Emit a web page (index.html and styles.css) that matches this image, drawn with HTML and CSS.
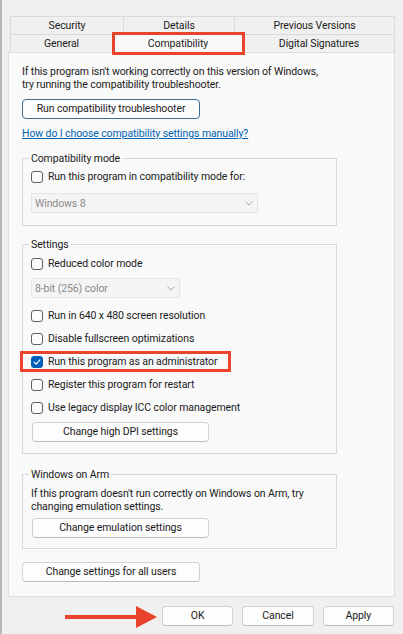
FILE: index.html
```html
<!DOCTYPE html>
<html>
<head>
<meta charset="utf-8">
<link rel="stylesheet" href="styles.css">
</head>
<body>
<div class="window">
  <div class="tabs">
    <div class="tabrow">
      <div class="tab t-sec">Security</div>
      <div class="tab t-det">Details</div>
      <div class="tab t-prev">Previous Versions</div>
    </div>
    <div class="tabrow">
      <div class="tab t-gen">General</div>
      <div class="tab t-comp selected">Compatibility<span class="mark"></span></div>
      <div class="tab t-dig">Digital Signatures</div>
    </div>
  </div>
  <div class="panel">
    <p class="intro">If this program isn't working correctly on this version of Windows,<br>try running the compatibility troubleshooter.</p>
    <div class="btn btn-focus btn-wide">Run compatibility troubleshooter</div>
    <a class="link" href="#">How do I choose compatibility settings manually?</a>

    <fieldset class="group g1">
      <legend>Compatibility mode</legend>
      <div class="row r-first1"><span class="cb"></span><span>Run this program in compatibility mode for:</span></div>
      <div class="select s1"><span>Windows 8</span><svg class="chev" width="8" height="5" viewBox="0 0 8 5"><path d="M0.5 0.5 L4 4 L7.5 0.5" fill="none" stroke="#a3a3a3" stroke-width="1"/></svg></div>
    </fieldset>

    <fieldset class="group g2">
      <legend>Settings</legend>
      <div class="row r-first2"><span class="cb"></span><span>Reduced color mode</span></div>
      <div class="select s2"><span>8-bit (256) color</span><svg class="chev" width="8" height="5" viewBox="0 0 8 5"><path d="M0.5 0.5 L4 4 L7.5 0.5" fill="none" stroke="#a3a3a3" stroke-width="1"/></svg></div>
      <div class="row r-after-sel"><span class="cb"></span><span>Run in 640 x 480 screen resolution</span></div>
      <div class="row r-next"><span class="cb"></span><span>Disable fullscreen optimizations</span></div>
      <div class="row r-next admin"><span class="cb checked"><svg width="10" height="10" viewBox="0 0 10 10"><path d="M2.2 5.2 L4.2 7.1 L7.9 2.9" fill="none" stroke="#fff" stroke-width="1.2" stroke-linecap="round" stroke-linejoin="round"/></svg></span><span>Run this program as an administrator</span><span class="mark"></span></div>
      <div class="row r-next"><span class="cb"></span><span>Register this program for restart</span></div>
      <div class="row r-next"><span class="cb"></span><span>Use legacy display ICC color management</span></div>
      <div class="btn btn-inner b-dpi">Change high DPI settings</div>
    </fieldset>

    <fieldset class="group g3">
      <legend>Windows on Arm</legend>
      <p class="armtext">If this program doesn't run correctly on Windows on Arm, try<br>changing emulation settings.</p>
      <div class="btn btn-inner b-emu">Change emulation settings</div>
    </fieldset>

    <div class="btn btn-wide b-all">Change settings for all users</div>
  </div>
  <div class="footer">
    <svg class="arrow" width="92" height="37" viewBox="0 0 92 37"><rect x="0" y="18" width="74" height="4" fill="#e8432c"/><polygon points="71,9 92,20 71,31" fill="#e8432c"/></svg>
    <div class="fbtn">OK</div>
    <div class="fbtn">Cancel</div>
    <div class="fbtn">Apply</div>
  </div>
</div>
</body>
</html>
```
FILE: styles.css
```css
html, body {
  margin: 0;
  padding: 0;
}
body {
  background: #f0f0f0;
  font-family: Roboto, "Liberation Sans", sans-serif;
  font-size: 10.5px;
  letter-spacing: -0.1px;
  color: #1b1b1b;
}
.window {
  width: 403px;
  height: 634px;
  box-sizing: border-box;
  border-left: 2px solid #b8b8b8;
  overflow: hidden;
}
.tabs {
  padding-top: 16px;
  margin-left: 8px;
  width: 385px;
}
.tabrow {
  display: flex;
  height: 18px;
}
.tab {
  box-sizing: border-box;
  height: 18px;
  line-height: 17px;
  text-align: center;
  border-top: 1px solid #dadada;
  border-right: 1px solid #dadada;
  background: #f0f0f0;
  position: relative;
  white-space: nowrap;
}
.tab:first-child {
  border-left: 1px solid #dadada;
}
.t-sec { width: 114px; }
.t-det { width: 111px; }
.t-prev { width: 160px; }
.t-gen { width: 103px; }
.t-comp { width: 131px; }
.t-dig { width: 151px; }
.tab.selected {
  background: #f9f9f9;
  height: 19px;
  margin-bottom: -1px;
  z-index: 2;
}
.mark {
  position: absolute;
  border: 3px solid #e8432c;
  box-sizing: border-box;
  pointer-events: none;
}
.tab .mark {
  top: -3px;
  left: -1px;
  right: -2px;
  bottom: -2px;
}
.panel {
  position: relative;
  margin-left: 6px;
  width: 387px;
  height: 545px;
  box-sizing: border-box;
  border: 1px solid #dedede;
  background: #f9f9f9;
  padding: 12px 0 0 13px;
}
.intro {
  margin: 0;
  line-height: 13px;
  white-space: nowrap;
}
.btn {
  box-sizing: border-box;
  height: 20px;
  line-height: 18px;
  text-align: center;
  background: #fdfdfd;
  border: 1px solid #d2d2d2;
  border-bottom-color: #bdbdbd;
  border-radius: 4px;
  white-space: nowrap;
}
.btn-wide {
  width: 178px;
}
.btn-focus {
  margin-top: 8px;
  border: 1px solid #3f6b8e;
}
.link {
  display: block;
  margin-top: 8px;
  line-height: 13px;
  color: #0063b1;
  text-decoration: underline;
  width: max-content;
}
.group {
  width: 315px;
  box-sizing: border-box;
  border: 1px solid #d9d9d9;
  margin: 0;
  padding: 0 8px 12px 8px;
  min-width: 0;
}
.group legend {
  padding: 0 2px;
  margin-left: -2px;
  line-height: 13px;
}
.g1 { margin-top: 12px; }
.g2 { margin-top: 12px; padding-bottom: 11px; }
.g3 { margin-top: 14px; padding-bottom: 10px; }
.row {
  display: flex;
  align-items: center;
  gap: 5px;
  height: 13px;
  line-height: 13px;
  white-space: nowrap;
  position: relative;
}
.r-first1 { margin-top: 5px; }
.r-first2 { margin-top: 6px; }
.r-after-sel { margin-top: 11px; }
.r-next { margin-top: 10px; }
.cb {
  width: 12px;
  height: 12px;
  box-sizing: border-box;
  border: 1px solid #5e5e5e;
  border-radius: 3px;
  background: #fbfbfb;
  flex: none;
  display: flex;
  align-items: center;
  justify-content: center;
}
.cb.checked {
  background: #005fb8;
  border-color: #005fb8;
}
.admin .mark {
  top: -4px;
  bottom: -4px;
  left: -11px;
  width: 211px;
}
.select {
  box-sizing: border-box;
  height: 20px;
  border: 1px solid #e4e4e4;
  border-radius: 2px;
  background: #f4f4f4;
  color: #8a8a8a;
  display: flex;
  align-items: center;
  justify-content: space-between;
  padding: 0 4px 0 3px;
  white-space: nowrap;
}
.s1 { width: 227px; margin-top: 10px; }
.s2 { width: 149px; margin-top: 8px; }
.btn-inner {
  width: 177px;
  margin-left: 1px;
}
.b-dpi { margin-top: 8px; }
.armtext {
  margin: 6px 0 0 0;
  line-height: 13px;
  white-space: nowrap;
}
.b-emu { margin-top: 5px; }
.b-all { margin-top: 13px; }
.footer {
  display: flex;
  align-items: flex-start;
  padding-left: 63px;
  height: 37px;
}
.arrow {
  flex: none;
  margin-right: 5px;
}
.fbtn {
  box-sizing: border-box;
  width: 72px;
  height: 20px;
  margin-top: 9px;
  margin-right: 9px;
  line-height: 18px;
  text-align: center;
  background: #fdfdfd;
  border: 1px solid #d2d2d2;
  border-bottom-color: #bdbdbd;
  border-radius: 4px;
}
```
